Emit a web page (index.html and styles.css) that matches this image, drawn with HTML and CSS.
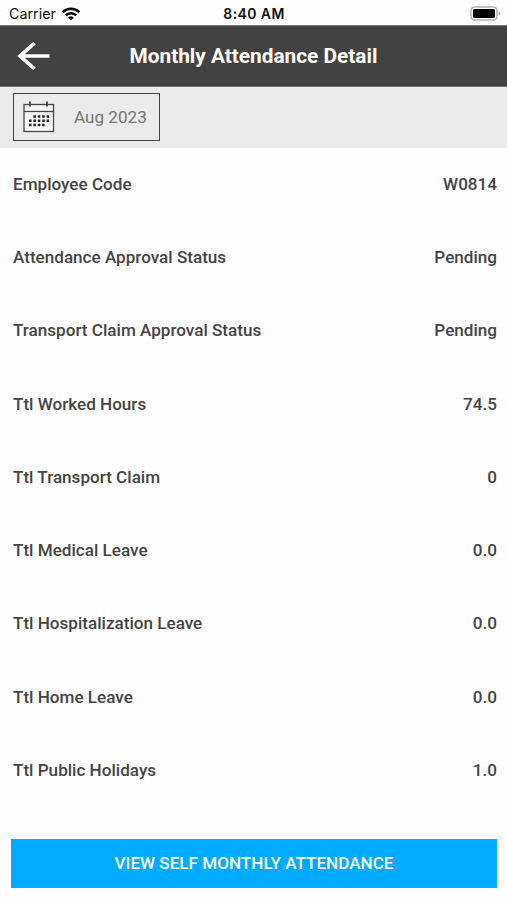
FILE: index.html
```html
<!DOCTYPE html>
<html lang="en">
<head>
  <meta charset="UTF-8">
  <meta name="viewport" content="width=device-width, initial-scale=1.0">
  <title>Monthly Attendance Detail</title>
  <link rel="stylesheet" href="styles.css">
</head>
<body>
  <div class="status-bar">
    <div class="carrier">
      <span>Carrier</span>
      <svg class="wifi" width="20" height="14" viewBox="0 0 20 14" fill="none" stroke="#000" stroke-width="2.5">
        <path d="M1.7 5.1a11.8 11.8 0 0 1 16.6 0"/>
        <path d="M4.7 8.4a7.5 7.5 0 0 1 10.6 0"/>
        <path d="M10 13.4 7.1 10.7a4.2 4.2 0 0 1 5.8 0z" fill="#000" stroke="none"/>
      </svg>
    </div>
    <span class="time">8:40 AM</span>
    <svg class="battery" width="31" height="16" viewBox="0 0 31 16">
      <rect x="1" y="1" width="26" height="13" rx="3.5" fill="#fff" stroke="#b4b4b4" stroke-width="1.5"/>
      <rect x="3" y="3" width="22" height="9" rx="1.5" fill="#000"/>
      <path d="M28.5 5.2c2.6 1 2.6 3.6 0 4.6z" fill="#b4b4b4"/>
    </svg>
  </div>

  <header>
    <button class="back" aria-label="Back">
      <svg width="34" height="30" viewBox="0 0 34 30" fill="none" stroke="#fff" stroke-width="3.6">
        <path d="M32.5 15H3M17.5 2.2 3 15l14.5 12.8"/>
      </svg>
    </button>
    <h1>Monthly Attendance Detail</h1>
  </header>

  <div class="filter-bar">
    <button class="month">
      <svg width="32" height="32" viewBox="0 0 32 32" fill="none" stroke="#444" stroke-width="1.3">
        <rect x="1" y="3.5" width="29.5" height="27" fill="#f6f6f6"/>
        <path d="M1 10.5h29.500"/>
        <path d="M7 .5v5M24 .5v5" stroke-width="1.8"/>
        <g stroke="#222" stroke-width="2.5" stroke-dasharray="2.5 1.9">
          <path d="M10.4 15.500h16M6 19.800h20.4M6 24.100h16"/>
        </g>
      </svg>
      <span>Aug 2023</span>
    </button>
  </div>

  <main>
    <dl class="details">
      <div class="row"><dt>Employee Code</dt><dd>W0814</dd></div>
      <div class="row"><dt>Attendance Approval Status</dt><dd>Pending</dd></div>
      <div class="row"><dt>Transport Claim Approval Status</dt><dd>Pending</dd></div>
      <div class="row"><dt>Ttl Worked Hours</dt><dd>74.5</dd></div>
      <div class="row"><dt>Ttl Transport Claim</dt><dd>0</dd></div>
      <div class="row"><dt>Ttl Medical Leave</dt><dd>0.0</dd></div>
      <div class="row"><dt>Ttl Hospitalization Leave</dt><dd>0.0</dd></div>
      <div class="row"><dt>Ttl Home Leave</dt><dd>0.0</dd></div>
      <div class="row"><dt>Ttl Public Holidays</dt><dd>1.0</dd></div>
    </dl>
    <button class="view-btn">VIEW SELF MONTHLY ATTENDANCE</button>
  </main>
</body>
</html>
```

FILE: styles.css
```css
* {
  box-sizing: border-box;
}
body {
  font-family: Roboto, sans-serif;
  margin: 0;
  height: 900px;
  background-color: #fefefe;
  color: #444;
}
button {
  font-family: inherit;
  cursor: pointer;
}
.status-bar {
  display: grid;
  grid-template-columns: 1fr auto 1fr;
  align-items: center;
  height: 25px;
  padding: 2px 6px 0 9px;
  font-family: Inter, sans-serif;
  font-size: 14.3px;
  color: #111;
}
.carrier {
  display: flex;
  align-items: center;
  gap: 5px;
}
.time {
  margin-right: 2px;
  font-size: 14px;
  font-weight: 600;
  letter-spacing: 0.4px;
}
.battery {
  justify-self: end;
}
header {
  display: grid;
  grid-template-columns: 60px 1fr 60px;
  align-items: center;
  height: 62px;
  background-color: #424242;
  border-top: 1px solid #777;
  border-bottom: 1px solid #777;
}
.back {
  display: flex;
  padding: 0 0 0 17px;
  background: none;
  border: none;
}
h1 {
  margin: 0;
  font-size: 20.8px;
  font-weight: 700;
  color: #fff;
  text-align: center;
}
.filter-bar {
  height: 61px;
  padding: 6px 13px;
  background-color: #ebebeb;
}
.month {
  display: flex;
  align-items: center;
  gap: 19px;
  width: 147px;
  height: 48px;
  padding: 0 0 0 9px;
  background: none;
  border: 1px solid #444;
  font-size: 17.1px;
  color: #757575;
  white-space: nowrap;
}
.details {
  margin: -1px 0 0;
  padding: 0 10px 0 13px;
}
.row {
  display: flex;
  justify-content: space-between;
  align-items: center;
  height: 73.3px;
  font-size: 17.1px;
  font-weight: 500;
}
.row dd {
  margin: 0;
}
.view-btn {
  display: block;
  width: 486px;
  height: 49px;
  margin: 32px 0 0 11px;
  padding: 0;
  background-color: #00aaff;
  border: none;
  color: #fff;
  font-size: 17.1px;
  font-weight: 500;
}
```
